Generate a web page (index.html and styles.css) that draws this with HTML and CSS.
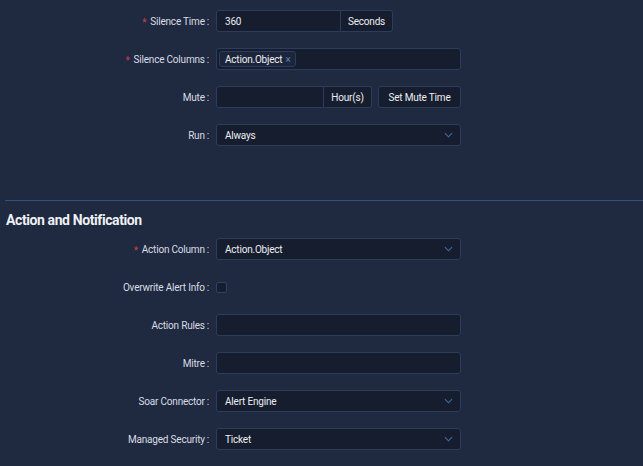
FILE: index.html
```html
<!DOCTYPE html>
<html>
<head>
<meta charset="utf-8">
<link rel="stylesheet" href="styles.css">
</head>
<body>
<div class="page">
  <div class="form form-top">
    <div class="row">
      <div class="lbl req">Silence Time</div>
      <div class="group g-time">
        <div class="inp grow">360</div>
        <div class="addon w-sec">Seconds</div>
      </div>
    </div>
    <div class="row">
      <div class="lbl req">Silence Columns</div>
      <div class="inp full tags">
        <span class="tag">Action.Object<span class="x">×</span></span>
      </div>
    </div>
    <div class="row">
      <div class="lbl">Mute</div>
      <div class="group g-mute">
        <div class="inp grow"></div>
        <div class="addon w-hour">Hour(s)</div>
      </div>
      <div class="btn">Set Mute Time</div>
    </div>
    <div class="row">
      <div class="lbl">Run</div>
      <div class="inp full sel">Always<svg class="arrow" viewBox="0 0 10 6" width="9" height="6"><path d="M1 1 L5 5 L9 1" fill="none" stroke="#3f6fa3" stroke-width="1.2"/></svg></div>
    </div>
  </div>
  <div class="divider"></div>
  <h2 class="title">Action and Notification</h2>
  <div class="form">
    <div class="row">
      <div class="lbl req">Action Column</div>
      <div class="inp full sel">Action.Object<svg class="arrow" viewBox="0 0 10 6" width="9" height="6"><path d="M1 1 L5 5 L9 1" fill="none" stroke="#3f6fa3" stroke-width="1.2"/></svg></div>
    </div>
    <div class="row">
      <div class="lbl">Overwrite Alert Info</div>
      <div class="chk"></div>
    </div>
    <div class="row">
      <div class="lbl">Action Rules</div>
      <div class="inp full"></div>
    </div>
    <div class="row">
      <div class="lbl">Mitre</div>
      <div class="inp full"></div>
    </div>
    <div class="row">
      <div class="lbl">Soar Connector</div>
      <div class="inp full sel">Alert Engine<svg class="arrow" viewBox="0 0 10 6" width="9" height="6"><path d="M1 1 L5 5 L9 1" fill="none" stroke="#3f6fa3" stroke-width="1.2"/></svg></div>
    </div>
    <div class="row">
      <div class="lbl">Managed Security</div>
      <div class="inp full sel">Ticket<svg class="arrow" viewBox="0 0 10 6" width="9" height="6"><path d="M1 1 L5 5 L9 1" fill="none" stroke="#3f6fa3" stroke-width="1.2"/></svg></div>
    </div>
  </div>
</div>
</body>
</html>
```

FILE: styles.css
```css
html, body {
  margin: 0;
  padding: 0;
  background: #1f2940;
}
.page {
  width: 643px;
  height: 466px;
  overflow: hidden;
  font-family: Roboto, "Liberation Sans", sans-serif;
  font-size: 10px;
  color: #e4e7ee;
  letter-spacing: -0.2px;
}
.form-top {
  padding-top: 10px;
}
.row {
  display: flex;
  align-items: center;
  height: 22px;
  margin-bottom: 16px;
}
.lbl {
  width: 209px;
  flex: none;
  display: flex;
  justify-content: flex-end;
  align-items: center;
  color: #dadde4;
  margin-right: 7px;
  white-space: nowrap;
}
.lbl::after {
  content: ":";
  margin-left: 2px;
}
.req::before {
  content: "*";
  color: #c9414a;
  margin-right: 4px;
  font-size: 10px;
  position: relative;
  top: 1px;
}
.inp {
  box-sizing: border-box;
  height: 22px;
  background: #161d2e;
  border: 1px solid #2c3c5c;
  border-radius: 3px;
  display: flex;
  align-items: center;
  padding: 0 8px;
  color: #eceef2;
}
.full {
  width: 245px;
}
.group {
  display: flex;
  height: 22px;
}
.g-time { width: 177px; }
.g-mute { width: 156px; }
.grow {
  flex: 1;
  border-radius: 3px 0 0 3px;
}
.addon {
  box-sizing: border-box;
  height: 22px;
  background: #161d2e;
  border: 1px solid #2c3c5c;
  border-left: none;
  border-radius: 0 3px 3px 0;
  display: flex;
  align-items: center;
  justify-content: center;
  color: #eceef2;
}
.w-sec { width: 52px; }
.w-hour { width: 48px; }
.btn {
  box-sizing: border-box;
  margin-left: 6px;
  width: 83px;
  height: 22px;
  background: #161d2e;
  border: 1px solid #2c3c5c;
  border-radius: 3px;
  display: flex;
  align-items: center;
  justify-content: center;
  color: #eceef2;
}
.tags {
  padding: 0 2px;
}
.tag {
  display: inline-flex;
  align-items: center;
  height: 16px;
  box-sizing: border-box;
  padding: 0 4px 0 5px;
  background: #1c2539;
  border: 1px solid #2c3c5c;
  border-radius: 3px;
}
.x {
  color: #4d86c2;
  margin-left: 3px;
  font-size: 10px;
}
.sel {
  justify-content: space-between;
  padding-right: 7px;
}
.arrow {
  display: block;
}
.chk {
  box-sizing: border-box;
  width: 11px;
  height: 11px;
  border: 1px solid #2f4266;
  border-radius: 2px;
  background: #161d2e;
}
.divider {
  margin: 54px 0 0 5px;
  height: 1px;
  background: #34507f;
}
.title {
  margin: 9px 0 8px 6px;
  font-size: 14px;
  line-height: 20px;
  font-weight: 700;
  color: #eef0f4;
  letter-spacing: -0.4px;
}
```
